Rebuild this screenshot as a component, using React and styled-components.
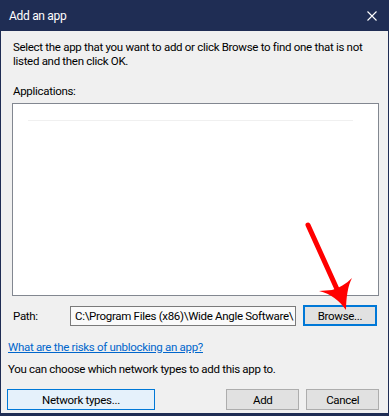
import React from "react";
import styled, { createGlobalStyle } from "styled-components";

const Global = createGlobalStyle`
  html, body {
    margin: 0;
    padding: 0;
    background: #f0f0f0;
  }
  body {
    font-family: Roboto, "Liberation Sans", Arial, sans-serif;
    font-size: 11.5px;
    letter-spacing: -0.3px;
    color: #000;
  }
`;

const Window = styled.div`
  position: relative;
  width: 389px;
  height: 416px;
  box-sizing: border-box;
  border: 1px solid #1f2d54;
  border-top: none;
  border-bottom: 3px solid #1f2d54;
  background: #f0f0f0;
  display: flex;
  flex-direction: column;
  overflow: hidden;
`;

const TitleBar = styled.div`
  height: 31px;
  background: #1f2d54;
  color: #fff;
  display: flex;
  align-items: center;
  justify-content: space-between;
  padding: 0 10px 0 9px;
  margin: 0 -1px;
  font-size: 12px;
`;

const Close = styled.svg`
  width: 10px;
  height: 10px;
  margin-right: 2px;
`;

const Body = styled.div`
  display: flex;
  flex-direction: column;
  padding: 0 9px 0 11px;
`;

const Text = styled.p`
  margin: ${(p) => p.$m || "0"};
  line-height: 14px;
  white-space: nowrap;
`;

const ListBox = styled.div`
  height: 193px;
  margin-top: 5px;
  border: 1px solid #828790;
  background: #fff;
  padding-top: 16px;
  box-sizing: border-box;
  display: flex;
  justify-content: center;
`;

const ListHeader = styled.div`
  width: 325px;
  height: 1px;
  background: #f0f0f0;
  margin-left: -10px;
`;

const PathRow = styled.div`
  display: flex;
  align-items: center;
  margin-top: 9px;
`;

const Label = styled.span`
  width: 58px;
  padding-left: 1px;
  box-sizing: border-box;
`;

const PathBox = styled.div`
  width: 226px;
  height: 20px;
  box-sizing: border-box;
  border: 1px solid #7a7a7a;
  background: #fafafa;
  padding: 0 4px;
  line-height: 18px;
  white-space: nowrap;
  overflow: hidden;
`;

const Button = styled.button`
  font: inherit;
  letter-spacing: inherit;
  color: #000;
  height: 21px;
  width: ${(p) => p.$w};
  box-sizing: border-box;
  background: ${(p) => (p.$active ? "#e5f1fb" : "#e1e1e1")};
  border: ${(p) =>
    p.$focus ? "2px solid #0078d7" : p.$active ? "1px solid #0078d7" : "1px solid #adadad"};
  padding: 0;
  margin-left: ${(p) => p.$ml || "0"};
`;

const Link = styled.a`
  color: #0066cc;
  text-decoration: underline;
  margin: 14px 0 0 -4px;
  line-height: 14px;
  align-self: flex-start;
`;

const Note = styled.p`
  margin: 8px 0 0 -4px;
  line-height: 14px;
`;

const Footer = styled.div`
  display: flex;
  margin: 13px 0 0 -5px;
`;

const Arrow = styled.svg`
  position: absolute;
  left: 300px;
  top: 218px;
  width: 60px;
  height: 96px;
`;

export default function App() {
  return (
    <>
      <Global />
      <Window>
        <TitleBar>
          <span>Add an app</span>
          <Close viewBox="0 0 10 10">
            <path d="M0.5 0.5 L9.5 9.5 M9.5 0.5 L0.5 9.5" stroke="#fff" strokeWidth="1.1" />
          </Close>
        </TitleBar>
        <Body>
          <Text $m="9px 0 0 1px">
            Select the app that you want to add or click Browse to find one that is not
            <br />
            listed and then click OK.
          </Text>
          <Text $m="16px 0 0 1px">Applications:</Text>
          <ListBox>
            <ListHeader />
          </ListBox>
          <PathRow>
            <Label>Path:</Label>
            <PathBox>C:\Program Files (x86)\Wide Angle Software\</PathBox>
            <Button $w="74px" $focus $ml="7px">
              Browse...
            </Button>
          </PathRow>
          <Link href="#">What are the risks of unblocking an app?</Link>
          <Note>You can choose which network types to add this app to.</Note>
          <Footer>
            <Button $w="149px" $active>
              Network types...
            </Button>
            <Button $w="74px" $ml="71px">
              Add
            </Button>
            <Button $w="73px" $ml="7px">
              Cancel
            </Button>
          </Footer>
        </Body>
        <Arrow viewBox="0 0 60 96">
          <path d="M7 7 L40 80" stroke="#ff0000" strokeWidth="5" strokeLinecap="round" />
          <path d="M18 73 C30 76 38 82 45 92 C45 80 47 67 51 60 C45 66 38 70 31 72 Z" fill="#ff0000" />
        </Arrow>
      </Window>
    </>
  );
}
